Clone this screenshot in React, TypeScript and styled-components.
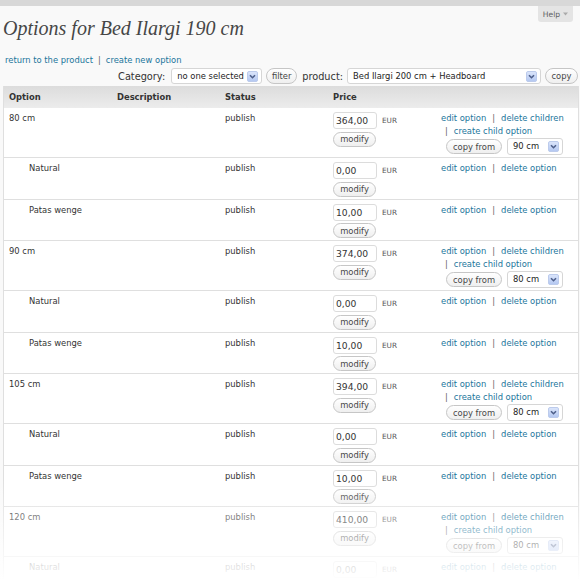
import React from "react";
import styled, { createGlobalStyle } from "styled-components";

const GlobalStyle = createGlobalStyle`
  html, body { margin: 0; padding: 0; background: #f9f9f9; }
  body {
    font-family: "DejaVu Sans", Verdana, sans-serif;
    font-size: 8.4px;
    color: #333;
  }
`;

const Page = styled.div`
  position: relative;
  height: 579px;
  overflow: hidden;
`;

const TopBar = styled.div`
  height: 6px;
  background: #d8d8d8;
`;

const HelpTab = styled.div`
  position: absolute;
  top: 6px;
  right: 7px;
  width: 35px;
  height: 16px;
  box-sizing: border-box;
  background: #e4e4e4;
  border-radius: 0 0 3px 3px;
  display: flex;
  align-items: center;
  justify-content: center;
  gap: 3px;
  font-size: 7.6px;
  color: #5f5f5f;
`;

const Title = styled.h2`
  margin: 10px 0 0 3px;
  font-family: "Liberation Serif", "Times New Roman", serif;
  font-style: italic;
  font-weight: normal;
  font-size: 20px;
  line-height: 24px;
  color: #464646;
`;

const LinkRow = styled.div`
  margin: 14px 0 0 5px;
  line-height: 12px;
  display: flex;
  align-items: center;
`;

const Link = styled.a`
  color: #21759b;
  text-decoration: none;
  white-space: nowrap;
`;

const Sep = styled.span<{ $l: number; $r: number }>`
  color: #666;
  margin: 0 ${(p) => p.$r}px 0 ${(p) => p.$l}px;
`;

const FilterRow = styled.div`
  margin-top: 2px;
  height: 16px;
  display: flex;
  justify-content: flex-end;
  align-items: center;
  padding-right: 2px;
`;

const Label = styled.span<{ $l: number; $r: number }>`
  font-size: 9.75px;
  color: #333;
  margin: 0 ${(p) => p.$r}px 0 ${(p) => p.$l}px;
  white-space: nowrap;
`;

const SelectBox = styled.div<{ $w: number; $h: number; $ml?: number }>`
  width: ${(p) => p.$w}px;
  height: ${(p) => p.$h}px;
  margin-left: ${(p) => p.$ml ?? 0}px;
  box-sizing: border-box;
  border: 1px solid #d6d6d6;
  border-radius: 3px;
  background: #fff;
  display: flex;
  align-items: center;
  justify-content: space-between;
  padding: 0 3px 0 5px;
  font-size: 8.4px;
  color: #222;
  white-space: nowrap;
  flex: none;
`;

const PillButton = styled.button<{ $w: number; $h: number; $ml?: number }>`
  width: ${(p) => p.$w}px;
  height: ${(p) => p.$h}px;
  margin: 0 0 0 ${(p) => p.$ml ?? 0}px;
  box-sizing: border-box;
  border: 1px solid #c6c6c6;
  border-radius: 8px;
  background: linear-gradient(#ffffff, #efefef);
  font-family: "DejaVu Sans", Verdana, sans-serif;
  font-size: 8.4px;
  color: #464646;
  padding: 0;
  display: flex;
  align-items: center;
  justify-content: center;
  flex: none;
  white-space: nowrap;
`;

const Table = styled.table`
  margin: 2px 0 0 3px;
  width: 576px;
  table-layout: fixed;
  border-collapse: separate;
  border-spacing: 0;
  border-left: 1px solid #dfdfdf;
  border-right: 1px solid #dfdfdf;
  background: #fff;
`;

const Th = styled.th`
  height: 22px;
  padding: 0 6px;
  text-align: left;
  font-weight: bold;
  font-size: 8.4px;
  color: #333;
  background: linear-gradient(#dcdcdc, #ececec);
  &:first-child { padding-left: 5px; }
`;

const Td = styled.td<{ $indent?: boolean }>`
  padding: 4px 6px 2px;
  vertical-align: top;
  line-height: 13px;
  border-bottom: 1px solid #dfdfdf;
  color: #333;
  white-space: nowrap;
  &:first-child { padding-left: ${(p) => (p.$indent ? 25 : 5)}px; }
`;

const PriceLine = styled.div`
  display: flex;
  align-items: center;
  height: 17px;
`;

const PriceInput = styled.input`
  width: 44px;
  height: 17px;
  box-sizing: border-box;
  border: 1px solid #dcdcdc;
  border-radius: 3px;
  padding: 0 2px;
  font-family: "DejaVu Sans", Verdana, sans-serif;
  font-size: 9.2px;
  color: #333;
  background: #fff;
  outline: none;
`;

const Currency = styled.span`
  margin-left: 5px;
  font-size: 7.3px;
  color: #555;
`;

const ModifyWrap = styled.div`
  margin-top: 2.5px;
`;

const ActionLine = styled.div<{ $pl?: number }>`
  height: 13px;
  padding-left: ${(p) => p.$pl ?? 0}px;
  display: flex;
  align-items: center;
`;

const CopyRow = styled.div`
  display: flex;
  align-items: center;
  height: 17px;
  margin-left: 5px;
`;

const Fade = styled.div`
  position: absolute;
  left: 0;
  right: 0;
  bottom: 0;
  height: 100px;
  background: linear-gradient(rgba(255, 255, 255, 0), rgba(255, 255, 255, 0.97));
  pointer-events: none;
`;

const Arrow = () => (
  <svg width="11" height="11" viewBox="0 0 11 11">
    <defs>
      <linearGradient id="arrowGrad" x1="0" y1="0" x2="0" y2="1">
        <stop offset="0" stopColor="#dce6fb" />
        <stop offset="1" stopColor="#b3c7f1" />
      </linearGradient>
    </defs>
    <rect x="0.5" y="0.5" width="10" height="10" rx="1.5" fill="url(#arrowGrad)" stroke="#bccbec" />
    <path d="M3 4.2 L5.5 6.7 L8 4.2" fill="none" stroke="#4d5f8a" strokeWidth="1.6" />
  </svg>
);

const HelpArrow = () => (
  <svg width="5" height="4" viewBox="0 0 5 4">
    <path d="M0 0.5 L5 0.5 L2.5 3.5 Z" fill="#aaa" />
  </svg>
);

type Child = { name: string; price: string };
type Parent = { name: string; price: string; copy: string; children: Child[] };

const kids: Child[] = [
  { name: "Natural", price: "0,00" },
  { name: "Patas wenge", price: "10,00" },
];

const data: Parent[] = [
  { name: "80 cm", price: "364,00", copy: "90 cm", children: kids },
  { name: "90 cm", price: "374,00", copy: "80 cm", children: kids },
  { name: "105 cm", price: "394,00", copy: "80 cm", children: kids },
  { name: "120 cm", price: "410,00", copy: "80 cm", children: kids },
];

const PriceCell = ({ price }: { price: string }) => (
  <Td>
    <PriceLine>
      <PriceInput defaultValue={price} readOnly />
      <Currency>EUR</Currency>
    </PriceLine>
    <ModifyWrap>
      <PillButton $w={43} $h={15}>modify</PillButton>
    </ModifyWrap>
  </Td>
);

const ParentRow = ({ p }: { p: Parent }) => (
  <tr>
    <Td>{p.name}</Td>
    <Td></Td>
    <Td>publish</Td>
    <PriceCell price={p.price} />
    <Td>
      <ActionLine>
        <Link>edit option</Link>
        <Sep $l={6} $r={6}>|</Sep>
        <Link>delete children</Link>
      </ActionLine>
      <ActionLine $pl={4}>
        <Sep $l={0} $r={6}>|</Sep>
        <Link>create child option</Link>
      </ActionLine>
      <CopyRow>
        <PillButton $w={56} $h={15}>copy from</PillButton>
        <SelectBox $w={56} $h={17} $ml={5}>
          <span>{p.copy}</span>
          <Arrow />
        </SelectBox>
      </CopyRow>
    </Td>
  </tr>
);

const ChildRow = ({ c }: { c: Child }) => (
  <tr>
    <Td $indent>{c.name}</Td>
    <Td></Td>
    <Td>publish</Td>
    <PriceCell price={c.price} />
    <Td>
      <ActionLine>
        <Link>edit option</Link>
        <Sep $l={6} $r={6}>|</Sep>
        <Link>delete option</Link>
      </ActionLine>
    </Td>
  </tr>
);

export default function App() {
  return (
    <Page>
      <GlobalStyle />
      <TopBar />
      <HelpTab>
        <span>Help</span>
        <HelpArrow />
      </HelpTab>
      <Title>Options for Bed Ilargi 190 cm</Title>
      <LinkRow>
        <Link>return to the product</Link>
        <Sep $l={5} $r={5}>|</Sep>
        <Link>create new option</Link>
      </LinkRow>
      <FilterRow>
        <Label $l={0} $r={6}>Category:</Label>
        <SelectBox $w={91} $h={16}>
          <span>no one selected</span>
          <Arrow />
        </SelectBox>
        <PillButton $w={31} $h={16} $ml={4}>filter</PillButton>
        <Label $l={5} $r={4}>product:</Label>
        <SelectBox $w={194} $h={16}>
          <span>Bed Ilargi 200 cm + Headboard</span>
          <Arrow />
        </SelectBox>
        <PillButton $w={33} $h={16} $ml={4}>copy</PillButton>
      </FilterRow>
      <Table>
        <colgroup>
          <col style={{ width: 107 }} />
          <col style={{ width: 108 }} />
          <col style={{ width: 108 }} />
          <col style={{ width: 108 }} />
          <col />
        </colgroup>
        <thead>
          <tr>
            <Th>Option</Th>
            <Th>Description</Th>
            <Th>Status</Th>
            <Th>Price</Th>
            <Th></Th>
          </tr>
        </thead>
        <tbody>
          {data.map((p) => (
            <React.Fragment key={p.name}>
              <ParentRow p={p} />
              {p.children.map((c) => (
                <ChildRow key={c.name} c={c} />
              ))}
            </React.Fragment>
          ))}
        </tbody>
      </Table>
      <Fade />
    </Page>
  );
}
